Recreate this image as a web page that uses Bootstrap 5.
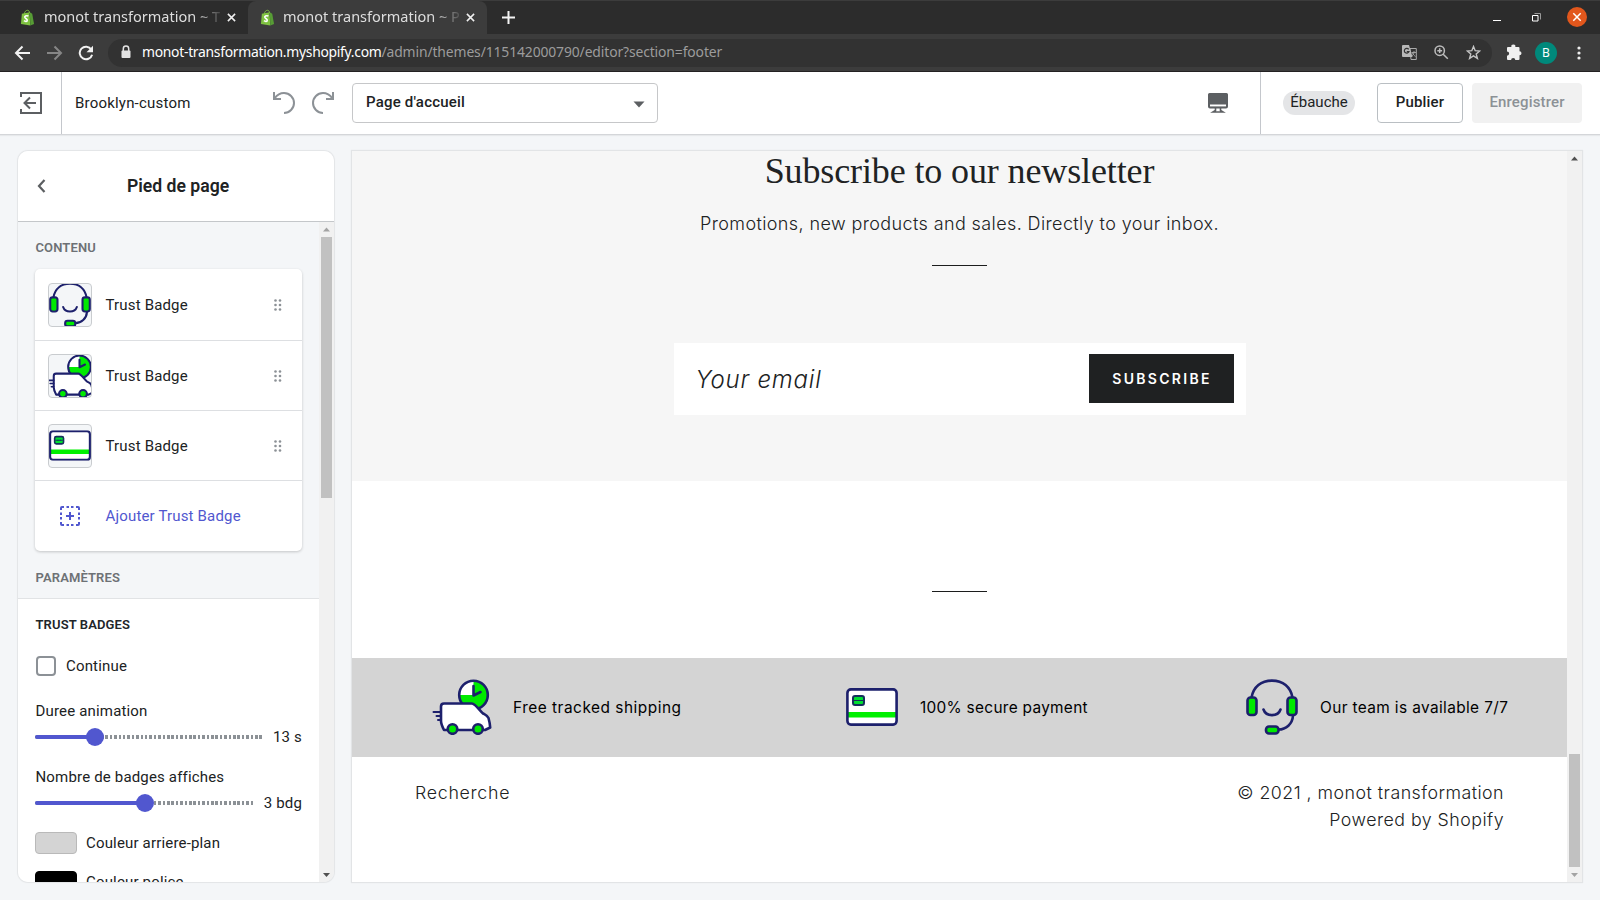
<!DOCTYPE html>
<html lang="fr">
<head>
<meta charset="utf-8">
<title>Brooklyn-custom</title>
<link rel="stylesheet" href="https://cdn.jsdelivr.net/npm/bootstrap@5.3.0/dist/css/bootstrap.min.css">
<script src="https://cdn.jsdelivr.net/npm/bootstrap@5.3.0/dist/js/bootstrap.bundle.min.js"></script>
<style>
body{width:1600px;height:900px;overflow:hidden;background:#f4f6f8;font-family:Roboto,sans-serif;font-size:15px;line-height:20px;color:#202223}
svg{display:block;flex:none}
.tabstrip{height:34px;background:#2c2c2c;border-top:1px solid #3c3c3c;font-family:"Noto Sans",sans-serif;font-size:14.5px;color:#dedede}
.tabstrip svg{margin-top:-1px}
.tab-item{height:33px;padding-left:20px}
.tab-item.first{width:248px}
.tab-item.current{width:239px;padding-left:12px;background:#3c3c3c;border-radius:8px 8px 0 0}
.tab-title{width:178px;margin-left:9px;padding-bottom:4px;overflow:hidden;white-space:nowrap;-webkit-mask-image:linear-gradient(90deg,#000 84%,rgba(0,0,0,.1) 100%);mask-image:linear-gradient(90deg,#000 84%,rgba(0,0,0,.1) 100%)}
.toolbar{height:38px;background:#3c3c3c;border-bottom:1px solid #232122;font-family:"Noto Sans",sans-serif;font-size:14px;padding-left:13px}
.omnibox{width:1384px;height:28px;border-radius:14px;background:#323232;margin-left:14px;padding:0 11px 0 9px;color:#9c9c9c}
.url{margin-left:7px;padding-bottom:2px;font-size:13.9px;letter-spacing:-.12px}
.url .host{letter-spacing:-.29px}
.avatar{width:22px;height:22px;background:#00897b;color:#fff;font-size:12px}
.topbar{height:63px;background:#fff;border-bottom:1px solid #d4d6d9;box-shadow:0 1px 1px rgba(0,0,0,.05)}
.exit-cell{width:62px;height:62px;border-right:1px solid #c4c7cc;padding-left:20px}
.pick{width:306px;height:40px;border:1px solid #c6c7c9;border-radius:4px;padding:0 12px 2px 13px;font-weight:500;letter-spacing:.2px}
.draft{width:72px;height:24px;border-radius:12px;background:#e4e5e7;padding-bottom:2px}
.topbtn{height:40px;border-radius:4px;font-size:15px;font-weight:500;padding:0 0 2px;line-height:20px;letter-spacing:.15px}
.publish{width:86px;border:1px solid #babfc3;color:#202223;background:#fff}
.save,.save:disabled{width:110px;border:0;background:#f1f1f1;color:#8c9196;opacity:1}
.main-area{padding:16px 18px 0}
.side{width:316px;height:731px;border-radius:10px;background:#f4f6f8;overflow:hidden;box-shadow:0 0 1px 1px rgba(0,0,0,.07)}
.side-head{height:71px;background:#fff;border-bottom:1px solid #c4c7ca;padding-left:19px}
.side-head h1{font-size:17.6px;font-weight:600;margin:1px 0 0 81px}
.side-body{width:301px;height:660px;overflow:hidden;letter-spacing:.17px}
.label-sm{font-size:13px;font-weight:600;color:#6d7175;letter-spacing:.12px}
.list-box{margin:0 17px;width:267px;height:282px;background:#fff;border-radius:5px;box-shadow:0 1px 3px rgba(0,0,0,.2)}
.line-item{height:70px;padding:0 20px 0 13px}
.line-item:first-child{height:71px;padding-top:1px}
.line-item+.line-item{border-top:1px solid #dddfe2}
.thumb{width:44px;height:44px;border:1px solid #c9cccf;border-radius:4px;background:#f4f6f8;overflow:hidden}
.line-item .caption{margin-left:13.5px}
.settings{border-top:1px solid #e1e3e5;background:#fff;height:300px;padding:0 17px}
.check{width:20px;height:20px;border:2px solid #8c9196;border-radius:4px}
.slider-row{height:20px}
.track{flex:none;height:4px;border-radius:2px;background:repeating-linear-gradient(90deg,#8c9196 0 2.5px,#fff 2.5px 4.4px);position:relative}
.fill{height:4px;border-radius:2px;background:#5157cf}
.knob{width:18px;height:18px;border-radius:50%;background:#5157cf;position:absolute;top:-7px}
.swatch{width:42px;height:22px;border-radius:4px;border:1px solid #b9b9b9}
.scroll{width:15px;background:#f1f1f1}
.scroll i{display:block;width:11px;background:#c1c1c1;margin:0 auto}
.preview{width:1230px;height:731px;margin-left:18px;background:#fff;box-shadow:0 0 1px 1px rgba(0,0,0,.07);overflow:hidden;font-family:Inter,sans-serif}
.shop{width:1215px}
.news{height:330px;background:#f6f6f6}
.news h2{font-family:"Liberation Serif",serif;font-size:36px;line-height:40px;margin:0;white-space:nowrap;letter-spacing:-.12px}
.news p{font-size:18px;font-weight:300;line-height:24px;margin:0;white-space:nowrap;letter-spacing:.39px}
.rule{width:55px;height:1px;background:#1c1d1d}
.mailbox{width:572px;height:72px;background:#fff;padding:0 12px 0 22px}
.mailbox span{font-size:24px;font-weight:300;font-style:italic;letter-spacing:.8px;margin-top:1px}
.sub{width:145px;height:49px;border:0;border-radius:0;background:#1f2122;color:#fff;font-size:14px;font-weight:600;letter-spacing:2.3px;padding:0 0 0 2px;margin-bottom:2px}
.trust{height:99px;background:#d4d4d4;color:#000;font-size:15.4px;padding-left:80px}
.trust span{white-space:nowrap;letter-spacing:.38px}
.trust svg{margin-top:-1px}
.foot{font-size:17.8px;font-weight:300;line-height:27px;padding:22px 63px 0;letter-spacing:.47px}
.foot div{white-space:nowrap}
</style>
</head>
<body>
<svg width="0" height="0" class="position-absolute">
<defs>
<symbol id="bag" viewBox="0 0 16 17"><path d="M2 4.500 10 3l1 14-10-1.700z" fill="#7fc241"/><path d="M10.500 3l2.500 1.500L15 15.500l-4 1.500z" fill="#579c35"/><path d="M4.500 5C5 2 6.500.8 8 .8S10 2 10.300 4" fill="none" stroke="#7fc241"/><path d="M9 7C6.500 6 4.600 7 5.200 8.500s3 1.500 2.500 3.300c-.5 1.300-2.400.9-3.500.1" fill="none" stroke="#fff" stroke-width="1.700"/></symbol>
<symbol id="cross" viewBox="0 0 10 10"><path d="M1 1l8 8M9 1l-8 8" stroke="#f0f0f0" stroke-width="1.700"/></symbol>
<symbol id="van" viewBox="0 0 60 56"><g stroke="#1d206c" stroke-width="2.600" stroke-linecap="round" stroke-linejoin="round"><circle cx="41.500" cy="16" r="14.500" fill="#fff" stroke="none"/><path d="M41.500 1.500A14.500 14.500 0 1 1 27 16h14.500z" fill="#00ea00" stroke="none"/><circle cx="41.500" cy="16" r="14.300" fill="none"/><path d="M41.500 7v9.500l7-3.500" fill="none"/><path d="M12 24.500h28c3 0 9 8.500 11 10 3 1.500 4 1.500 5.500 4.500.7 2.500 1.500 7 1.700 9.500L53 51H12c-2-4-3-7-3-9V27.500c0-2 1-3 3-3z" fill="#fff"/><path d="M1.500 33H9M4.500 37H9M6 41h3" fill="none" stroke-width="2"/><circle cx="20.500" cy="50" r="4.800" fill="#00ea00"/><circle cx="46" cy="50" r="4.800" fill="#00ea00"/></g></symbol>
<symbol id="pay" viewBox="0 0 52 38"><rect x="1.500" y="1.500" width="49" height="35" rx="3.500" fill="#fff"/><path d="M2 24h48v5.500H2z" fill="#00f000"/><rect x="1.400" y="1.400" width="49.200" height="35.200" rx="3.500" fill="none" stroke="#1d206c" stroke-width="2.600"/><rect x="7" y="8" width="11" height="9" rx="2" fill="#00e030" stroke="#17305c" stroke-width="2"/><path d="M8 12.500h3.500M13.500 12.500H17M10.500 12.500h4" stroke="#17305c" stroke-width="1.200"/></symbol>
<symbol id="headset" viewBox="0 0 52 56"><g fill="none" stroke="#1d206c" stroke-width="2.600" stroke-linecap="round"><path d="M5.500 18.500C7.500 8 15 1.600 26 1.600S44.500 8 46.500 18.500M47 36.500C46.500 45 40 50.500 32.500 50.500"/><path d="M17.500 30.500C20 38 32 38 34.500 30.500"/><rect x="1.500" y="18.500" width="9" height="17.500" rx="3" fill="#00ea00"/><rect x="41.500" y="18.500" width="9" height="17.500" rx="3" fill="#00ea00"/><rect x="20" y="47.500" width="12.500" height="7" rx="3" fill="#00ea00"/></g></symbol>
<symbol id="grip" viewBox="0 0 8 12"><g fill="#8c9196"><circle cx="1.500" cy="1.500" r="1.300"/><circle cx="6" cy="1.500" r="1.300"/><circle cx="1.500" cy="6" r="1.300"/><circle cx="6" cy="6" r="1.300"/><circle cx="1.500" cy="10.500" r="1.300"/><circle cx="6" cy="10.500" r="1.300"/></g></symbol>
</defs>
</svg>

<div class="tabstrip d-flex align-items-center">
  <div class="tab-item first d-flex align-items-center"><svg width="15" height="17"><use href="#bag"/></svg><div class="tab-title">monot transformation ~ T</div><svg width="9" height="9" style="margin-left:5px"><use href="#cross"/></svg></div>
  <div class="tab-item current d-flex align-items-center"><svg width="15" height="17"><use href="#bag"/></svg><div class="tab-title" style="margin-left:8px">monot transformation ~ P</div><svg width="9" height="9" style="margin-left:5px"><use href="#cross"/></svg></div>
  <svg width="13" height="13" viewBox="0 0 13 13" style="margin-left:15px"><path d="M6.500 0v13M0 6.500h13" stroke="#f4f4f4" stroke-width="2"/></svg>
  <div class="ms-auto d-flex align-items-center">
    <svg width="8" height="10" viewBox="0 0 8 10"><path d="M0 8.500h8" stroke="#fff"/></svg>
    <svg width="9" height="9" viewBox="0 0 9 9" fill="none" style="margin-left:31px;margin-right:26px"><path d="M.5 2.500h5.500V8H.5z" stroke="#fff"/><path d="M2.500.5h6v6" stroke="#999"/></svg>
    <svg width="20" height="20" style="margin-right:13px" viewBox="0 0 20 20"><circle cx="10" cy="10" r="10" fill="#e2571c"/><path d="M6.300 6.300l7.400 7.400M13.700 6.300l-7.400 7.400" stroke="#fff" stroke-width="1.500"/></svg>
  </div>
</div>
<div class="toolbar d-flex align-items-center">
  <svg width="16" height="16" viewBox="0 0 16 16" fill="none" stroke="#f2f2f2" stroke-width="2" style="margin-left:1px"><path d="M16 8H2.500M8.500 1.500L2 8l6.500 6.500"/></svg>
  <svg width="16" height="16" viewBox="0 0 16 16" fill="none" stroke="#868686" stroke-width="2" style="margin-left:17px"><path d="M0 8h13.500M7.500 1.500L14 8l-6.500 6.500"/></svg>
  <svg width="16" height="16" viewBox="0 0 16 16" style="margin-left:15px"><path d="M13.300 4.500A6.300 6.300 0 1 0 14.100 9.700" fill="none" stroke="#f2f2f2" stroke-width="2"/><path d="M15 .8v6.500H8.500z" fill="#f2f2f2"/></svg>
  <div class="omnibox d-flex align-items-center">
    <svg width="18" height="14" viewBox="0 0 18 14" style="margin-bottom:2px"><rect x="4.500" y="5.500" width="9" height="7.500" rx="1" fill="#e4e4e4"/><path d="M6.300 6V3.700a2.700 2.700 0 0 1 5.400 0V6" fill="none" stroke="#e4e4e4" stroke-width="1.500"/></svg>
    <div class="url"><span class="text-white host">monot-transformation.myshopify.com</span>/admin/themes/115142000790/editor?section=footer</div>
    <div class="ms-auto d-flex align-items-center">
      <svg width="15" height="15" viewBox="0 0 15 15"><path d="M8 3.500h6.300v11H9z" fill="none" stroke="#aaa"/><path d="M1 0h6l3.500 12H1a1 1 0 0 1-1-1V1a1 1 0 0 1 1-1z" fill="#b8b8b8"/><path d="M6.700 4.400A2.400 2.400 0 1 0 7 6.600H4.800" fill="none" stroke="#323232" stroke-width="1.200"/><path d="M9.500 7.500H14M12 6v1.500c-.2 2-1.500 3-2 3.500M10.500 8c.8 1.800 2 2.800 3 3.500" stroke="#aaa" fill="none" stroke-width=".9"/></svg>
      <svg width="15" height="15" viewBox="0 0 15 15" fill="none" stroke="#bdbdbd" stroke-width="1.500" style="margin-left:17px"><circle cx="5.700" cy="5.700" r="4.700"/><path d="M9.200 9.200l4.600 4.600M5.700 3.300v4.800M3.300 5.700h4.800"/></svg>
      <svg width="15" height="15" viewBox="0 0 15 15" fill="none" stroke="#c6c6c6" stroke-width="1.400" style="margin-left:17px"><path d="M7.500 1.500l1.700 4.200 4.500.3-3.500 2.900 1.200 4.500-3.900-2.500-3.900 2.500 1.200-4.500L1.300 6l4.500-.3z"/></svg>
    </div>
  </div>
  <svg width="16" height="16" viewBox="0 0 16 16" style="margin-left:14px;margin-bottom:2px"><path d="M1 4a1 1 0 0 1 1-1h3.400a2 2 0 1 1 3.900 0h3.200a1 1 0 0 1 1 1v3.300a2 2 0 1 1 0 4V15a1 1 0 0 1-1 1H9.300a2.100 2.100 0 1 0-4.200 0H2a1 1 0 0 1-1-1v-3.300a2.100 2.100 0 1 0 0-4.300z" fill="#f0f0f0"/></svg>
  <div class="avatar rounded-circle d-flex align-items-center justify-content-center" style="margin-left:13px">B</div>
  <svg width="4" height="14" viewBox="0 0 4 14" style="margin-left:20px" fill="#eee"><circle cx="2" cy="2" r="1.600"/><circle cx="2" cy="7" r="1.600"/><circle cx="2" cy="12" r="1.600"/></svg>
</div>

<header class="topbar d-flex align-items-center">
  <div class="exit-cell d-flex align-items-center"><svg width="22" height="22" viewBox="0 0 22 22" fill="none" stroke="#5c5f62" stroke-width="2"><path d="M1 5V1h20v20H1v-4"/><path d="M16 11H5M10 5.500L4.500 11l5.500 5.500"/></svg></div>
  <div style="margin-left:13px;width:198px;letter-spacing:.2px">Brooklyn-custom</div>
  <svg width="22" height="22" viewBox="0 0 22 22" fill="none" stroke="#8c9196" stroke-width="2"><path d="M1 0v7h7M1.500 6.500C4 3 7 1 11 1a10 10 0 0 1 0 20"/></svg>
  <svg width="22" height="22" viewBox="0 0 22 22" fill="none" stroke="#8c9196" stroke-width="2" style="margin-left:17px"><path d="M21 0v7h-7M20.500 6.500C18 3 15 1 11 1a10 10 0 0 0 0 20"/></svg>
  <div class="pick d-flex align-items-center justify-content-between" style="margin-left:18px"><span>Page d'accueil</span><svg width="12" height="7" viewBox="0 0 12 7" class="mt-1"><path d="M.5.500h11L6 6.500z" fill="#5c5f62"/></svg></div>
  <div class="ms-auto d-flex align-items-center">
    <svg width="20" height="20" viewBox="0 0 20 20"><path d="M1.500 0h17A1.500 1.500 0 0 1 20 1.500v12a2 2 0 0 1-2 2H2a2 2 0 0 1-2-2v-12A1.500 1.500 0 0 1 1.500 0z" fill="#5c5f62"/><path d="M2 11.500h16v1.900H2z" fill="#fff"/><path d="M7.500 15v2.500L5 19h10l-2.500-1.500V15" fill="none" stroke="#5c5f62" stroke-width="1.600"/></svg>
    <div style="margin-left:32px;width:1px;height:62px;background:#c4c7cc"></div>
    <div class="draft d-flex align-items-center justify-content-center" style="margin-left:22px">Ébauche</div>
    <button class="btn topbtn publish" style="margin-left:22px">Publier</button>
    <button class="btn topbtn save" disabled style="margin:0 18px 0 9px">Enregistrer</button>
  </div>
</header>

<div class="main-area d-flex">
  <aside class="side">
    <div class="side-head d-flex align-items-center"><svg width="9" height="14" viewBox="0 0 9 14"><path d="M7.500 1L2 7l5.500 6" fill="none" stroke="#5c5f62" stroke-width="2.200"/></svg><h1>Pied de page</h1></div>
    <div class="d-flex">
      <div class="side-body">
        <div class="label-sm" style="padding:16px 17.500px 11px">CONTENU</div>
        <div class="list-box">
          <div class="line-item d-flex align-items-center"><div class="thumb"><svg width="42" height="42" viewBox="0 2 52 52"><use href="#headset" width="52" height="56"/></svg></div><span class="caption">Trust Badge</span><svg width="8" height="12" class="ms-auto"><use href="#grip"/></svg></div>
          <div class="line-item d-flex align-items-center"><div class="thumb"><svg width="42" height="42" viewBox="3 1 53 53"><use href="#van" width="60" height="56"/></svg></div><span class="caption">Trust Badge</span><svg width="8" height="12" class="ms-auto"><use href="#grip"/></svg></div>
          <div class="line-item d-flex align-items-center"><div class="thumb d-flex align-items-center"><svg width="42" height="31" viewBox="0 0 52 38"><use href="#pay" width="52" height="38"/></svg></div><span class="caption">Trust Badge</span><svg width="8" height="12" class="ms-auto"><use href="#grip"/></svg></div>
          <div class="line-item d-flex align-items-center" style="color:#5157cf"><svg width="20" height="20" viewBox="0 0 20 20" fill="none" stroke="#5157cf" stroke-width="2" style="margin:0 12px"><path d="M4 1H2a1 1 0 0 0-1 1v2M6.500 1h2.500M11 1h2.500M16 1h2a1 1 0 0 1 1 1v2M19 6.500v2.500M19 11v2.500M19 16v2a1 1 0 0 1-1 1h-2M13.500 19H11M9 19H6.500M4 19H2a1 1 0 0 1-1-1v-2M1 13.500V11M1 9V6.500M10 6v8M6 10h8"/></svg><span class="caption">Ajouter Trust Badge</span></div>
        </div>
        <div class="label-sm" style="padding:17px 17.500px 10px">PARAMÈTRES</div>
        <div class="settings">
          <div class="label-sm text-dark" style="padding:16px .5px 20px">TRUST BADGES</div>
          <div class="d-flex align-items-center" style="padding-left:1px;height:22px"><div class="check"></div><span style="margin-left:10px">Continue</span></div>
          <div style="margin-top:24px;padding-left:.5px">Duree animation</div>
          <div class="slider-row d-flex align-items-center justify-content-between" style="margin-top:6px"><div class="track" style="width:229px"><div class="fill" style="width:60px"></div><div class="knob" style="left:51px"></div></div><span class="text-nowrap">13 s</span></div>
          <div style="margin-top:20px;padding-left:.5px">Nombre de badges affiches</div>
          <div class="slider-row d-flex align-items-center justify-content-between" style="margin-top:6px"><div class="track" style="width:220px"><div class="fill" style="width:110px"></div><div class="knob" style="left:101px"></div></div><span class="text-nowrap">3 bdg</span></div>
          <div class="d-flex align-items-center" style="margin-top:19px"><div class="swatch" style="background:#d4d4d4"></div><span style="margin-left:9px">Couleur arriere-plan</span></div>
          <div class="d-flex align-items-center" style="margin-top:17px"><div class="swatch" style="background:#000;border-color:#000"></div><span style="margin-left:9px">Couleur police</span></div>
        </div>
      </div>
      <div class="scroll"><svg width="15" height="15" viewBox="0 0 15 15"><path d="M7.500 5.500L11 9.500H4z" fill="#a3a3a3"/></svg><i style="height:261px"></i><div style="height:369px"></div><svg width="15" height="15" viewBox="0 0 15 15"><path d="M4 6h7l-3.500 4z" fill="#505050"/></svg></div>
    </div>
  </aside>
  <main class="preview d-flex">
    <div class="shop">
      <section class="news d-flex flex-column align-items-center">
        <h2>Subscribe to our newsletter</h2>
        <p style="margin-top:21px">Promotions, new products and sales. Directly to your inbox.</p>
        <div class="rule" style="margin-top:29px"></div>
        <div class="mailbox d-flex align-items-center justify-content-between" style="margin-top:77px"><span>Your email</span><button class="btn sub">SUBSCRIBE</button></div>
      </section>
      <div class="d-flex justify-content-center" style="height:177px;padding-top:110px"><div class="rule"></div></div>
      <section class="trust d-flex align-items-center">
        <div class="d-flex align-items-center" style="width:414px"><svg width="60" height="56" viewBox="0 0 60 56"><use href="#van"/></svg><span style="margin-left:21px;letter-spacing:.52px">Free tracked shipping</span></div>
        <div class="d-flex align-items-center" style="width:400px"><svg width="52" height="38" viewBox="0 0 52 38"><use href="#pay"/></svg><span style="margin-left:22px;letter-spacing:.3px">100% secure payment</span></div>
        <div class="d-flex align-items-center"><svg width="52" height="56" viewBox="0 0 52 56"><use href="#headset"/></svg><span style="margin-left:22px">Our team is available 7/7</span></div>
      </section>
      <footer class="foot d-flex justify-content-between"><div style="letter-spacing:.7px">Recherche</div><div class="text-end"><div>© 2021 , monot transformation</div><div>Powered by Shopify</div></div></footer>
    </div>
    <div class="scroll"><svg width="15" height="15" viewBox="0 0 15 15"><path d="M7.500 5.500L11 9.500H4z" fill="#505050"/></svg><div style="height:588px"></div><i style="height:113px"></i><svg width="15" height="15" viewBox="0 0 15 15"><path d="M4 6h7l-3.500 4z" fill="#a3a3a3"/></svg></div>
  </main>
</div>
</body>
</html>
